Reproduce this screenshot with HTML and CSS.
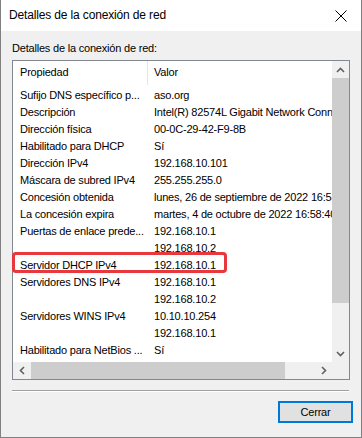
FILE: index.html
```html
<!DOCTYPE html>
<html lang="es">
<head>
  <meta charset="UTF-8" />
  <title>Detalles de la conexión de red</title>
  <link rel="stylesheet" href="styles.css">
</head>
<body>
  <div class="window">
    <div class="titlebar">
      <span class="title">Detalles de la conexión de red</span>
      <svg class="close" width="12" height="12" viewBox="0 0 12 12">
        <path d="M0.5 0.5 L11.5 11.5 M11.5 0.5 L0.5 11.5" stroke="#000" stroke-width="1" fill="none"/>
      </svg>
    </div>

    <div class="dialog">
      <div class="group-label">Detalles de la conexión de red:</div>

      <div class="listbox">
        <div class="list-view">
          <div class="list-header">
            <div class="col-prop">Propiedad</div>
            <div class="col-val">Valor</div>
          </div>
          <div class="rows">
            <div class="row"><div class="col-prop">Sufijo DNS específico p...</div><div class="col-val">aso.org</div></div>
            <div class="row"><div class="col-prop">Descripción</div><div class="col-val">Intel(R) 82574L Gigabit Network Connection</div></div>
            <div class="row"><div class="col-prop">Dirección física</div><div class="col-val">00-0C-29-42-F9-8B</div></div>
            <div class="row"><div class="col-prop">Habilitado para DHCP</div><div class="col-val">Sí</div></div>
            <div class="row"><div class="col-prop">Dirección IPv4</div><div class="col-val">192.168.10.101</div></div>
            <div class="row"><div class="col-prop">Máscara de subred IPv4</div><div class="col-val">255.255.255.0</div></div>
            <div class="row"><div class="col-prop">Concesión obtenida</div><div class="col-val">lunes, 26 de septiembre de 2022 16:58:40</div></div>
            <div class="row"><div class="col-prop">La concesión expira</div><div class="col-val">martes, 4 de octubre de 2022 16:58:40</div></div>
            <div class="row"><div class="col-prop">Puertas de enlace prede...</div><div class="col-val">192.168.10.1</div></div>
            <div class="row"><div class="col-prop"></div><div class="col-val">192.168.10.2</div></div>
            <div class="row"><div class="col-prop">Servidor DHCP IPv4</div><div class="col-val">192.168.10.1</div></div>
            <div class="row"><div class="col-prop">Servidores DNS IPv4</div><div class="col-val">192.168.10.1</div></div>
            <div class="row"><div class="col-prop"></div><div class="col-val">192.168.10.2</div></div>
            <div class="row"><div class="col-prop">Servidores WINS IPv4</div><div class="col-val">10.10.10.254</div></div>
            <div class="row"><div class="col-prop"></div><div class="col-val">192.168.10.1</div></div>
            <div class="row"><div class="col-prop">Habilitado para NetBios ...</div><div class="col-val">Sí</div></div>
            <div class="row"><div class="col-prop">Vínculo: dirección IPv6 l...</div><div class="col-val">fe80::b89d:830:849c:3dcb:c0c1%6</div></div>
          </div>
        </div>

        <div class="vscroll">
          <div class="arrow">
            <svg width="9" height="6" viewBox="0 0 9 6"><path d="M1 5 L4.5 1.5 L8 5" stroke="#606060" stroke-width="1.6" fill="none"/></svg>
          </div>
          <div class="vtrack"><div class="vthumb"></div></div>
          <div class="arrow">
            <svg width="9" height="6" viewBox="0 0 9 6"><path d="M1 1 L4.5 4.5 L8 1" stroke="#606060" stroke-width="1.6" fill="none"/></svg>
          </div>
        </div>

        <div class="hscroll">
          <div class="arrow">
            <svg width="6" height="9" viewBox="0 0 6 9"><path d="M5 1 L1.5 4.5 L5 8" stroke="#606060" stroke-width="1.6" fill="none"/></svg>
          </div>
          <div class="htrack"><div class="hthumb"></div></div>
          <div class="arrow">
            <svg width="6" height="9" viewBox="0 0 6 9"><path d="M1 1 L4.5 4.5 L1 8" stroke="#606060" stroke-width="1.6" fill="none"/></svg>
          </div>
        </div>
        <div class="corner"></div>

        <div class="highlight"></div>
      </div>

      <div class="separator"></div>

      <div class="actions">
        <button class="btn">Cerrar</button>
      </div>
    </div>
  </div>
</body>
</html>
```

FILE: styles.css
```css
* {
  margin: 0;
  padding: 0;
  box-sizing: border-box;
}

body {
  font-family: "Liberation Sans", Arial, sans-serif;
  font-size: 11px;
  color: #000000;
  background: #ffffff;
}

.window {
  width: 362px;
  height: 438px;
  border: 1px solid #808080;
  border-top: none;
  background: #f0f0f0;
  display: flex;
  flex-direction: column;
}

.titlebar {
  height: 31px;
  background: #ffffff;
  display: flex;
  align-items: center;
  justify-content: space-between;
  padding: 0 14px 1px 8px;
}

.title {
  font-size: 12px;
  letter-spacing: -0.15px;
}

.close {
  margin-top: 1px;
}

.dialog {
  padding: 10px 11px 0 11px;
  display: flex;
  flex-direction: column;
}

.group-label {
  height: 19px;
  line-height: 14px;
  letter-spacing: -0.2px;
}

/* list control */
.listbox {
  position: relative;
  height: 320px;
  border: 1px solid #828790;
  background: #ffffff;
  display: grid;
  grid-template-columns: 319px 17px;
  grid-template-rows: 301px 17px;
}

.list-view {
  overflow: hidden;
  letter-spacing: -0.2px;
}

.list-header {
  display: flex;
  height: 26px;
}

.list-header .col-prop,
.list-header .col-val {
  line-height: 22px;
}

.list-header .col-prop {
  border-right: 1px solid #e5e5e5;
  height: 24px;
}

.col-prop {
  width: 135px;
  flex-shrink: 0;
  padding-left: 7px;
  white-space: nowrap;
  overflow: hidden;
}

.col-val {
  padding-left: 6px;
  white-space: nowrap;
}

.row {
  display: flex;
  height: 17px;
  line-height: 17px;
}

.vscroll {
  background: #f0f0f0;
  display: flex;
  flex-direction: column;
}

.vscroll .arrow {
  height: 17px;
  display: flex;
  align-items: center;
  justify-content: center;
}

.vtrack {
  flex: 1;
}

.vthumb {
  height: 225px;
  background: #cdcdcd;
}

.hscroll {
  background: #f0f0f0;
  display: flex;
}

.hscroll .arrow {
  width: 17px;
  display: flex;
  align-items: center;
  justify-content: center;
}

.htrack {
  flex: 1;
  padding: 0 0 0 1px;
}

.hthumb {
  width: 254px;
  height: 100%;
  background: #cdcdcd;
}

.corner {
  background: #f0f0f0;
}

.highlight {
  position: absolute;
  left: -1px;
  top: 191px;
  width: 215px;
  height: 21px;
  border: 3px solid #e8383d;
  border-radius: 4px;
}

.separator {
  margin-top: 10px;
  height: 2px;
  border-top: 1px solid #a0a0a0;
  border-bottom: 1px solid #ffffff;
  margin-right: 1px;
}

.actions {
  display: flex;
  justify-content: flex-end;
  padding-top: 9px;
  margin-right: -3px;
}

.btn {
  width: 75px;
  height: 22px;
  background: #e1e1e1;
  border: 2px solid #0078d7;
  font-family: "Liberation Sans", Arial, sans-serif;
  font-size: 11px;
  letter-spacing: -0.2px;
  color: #000000;
}
```
